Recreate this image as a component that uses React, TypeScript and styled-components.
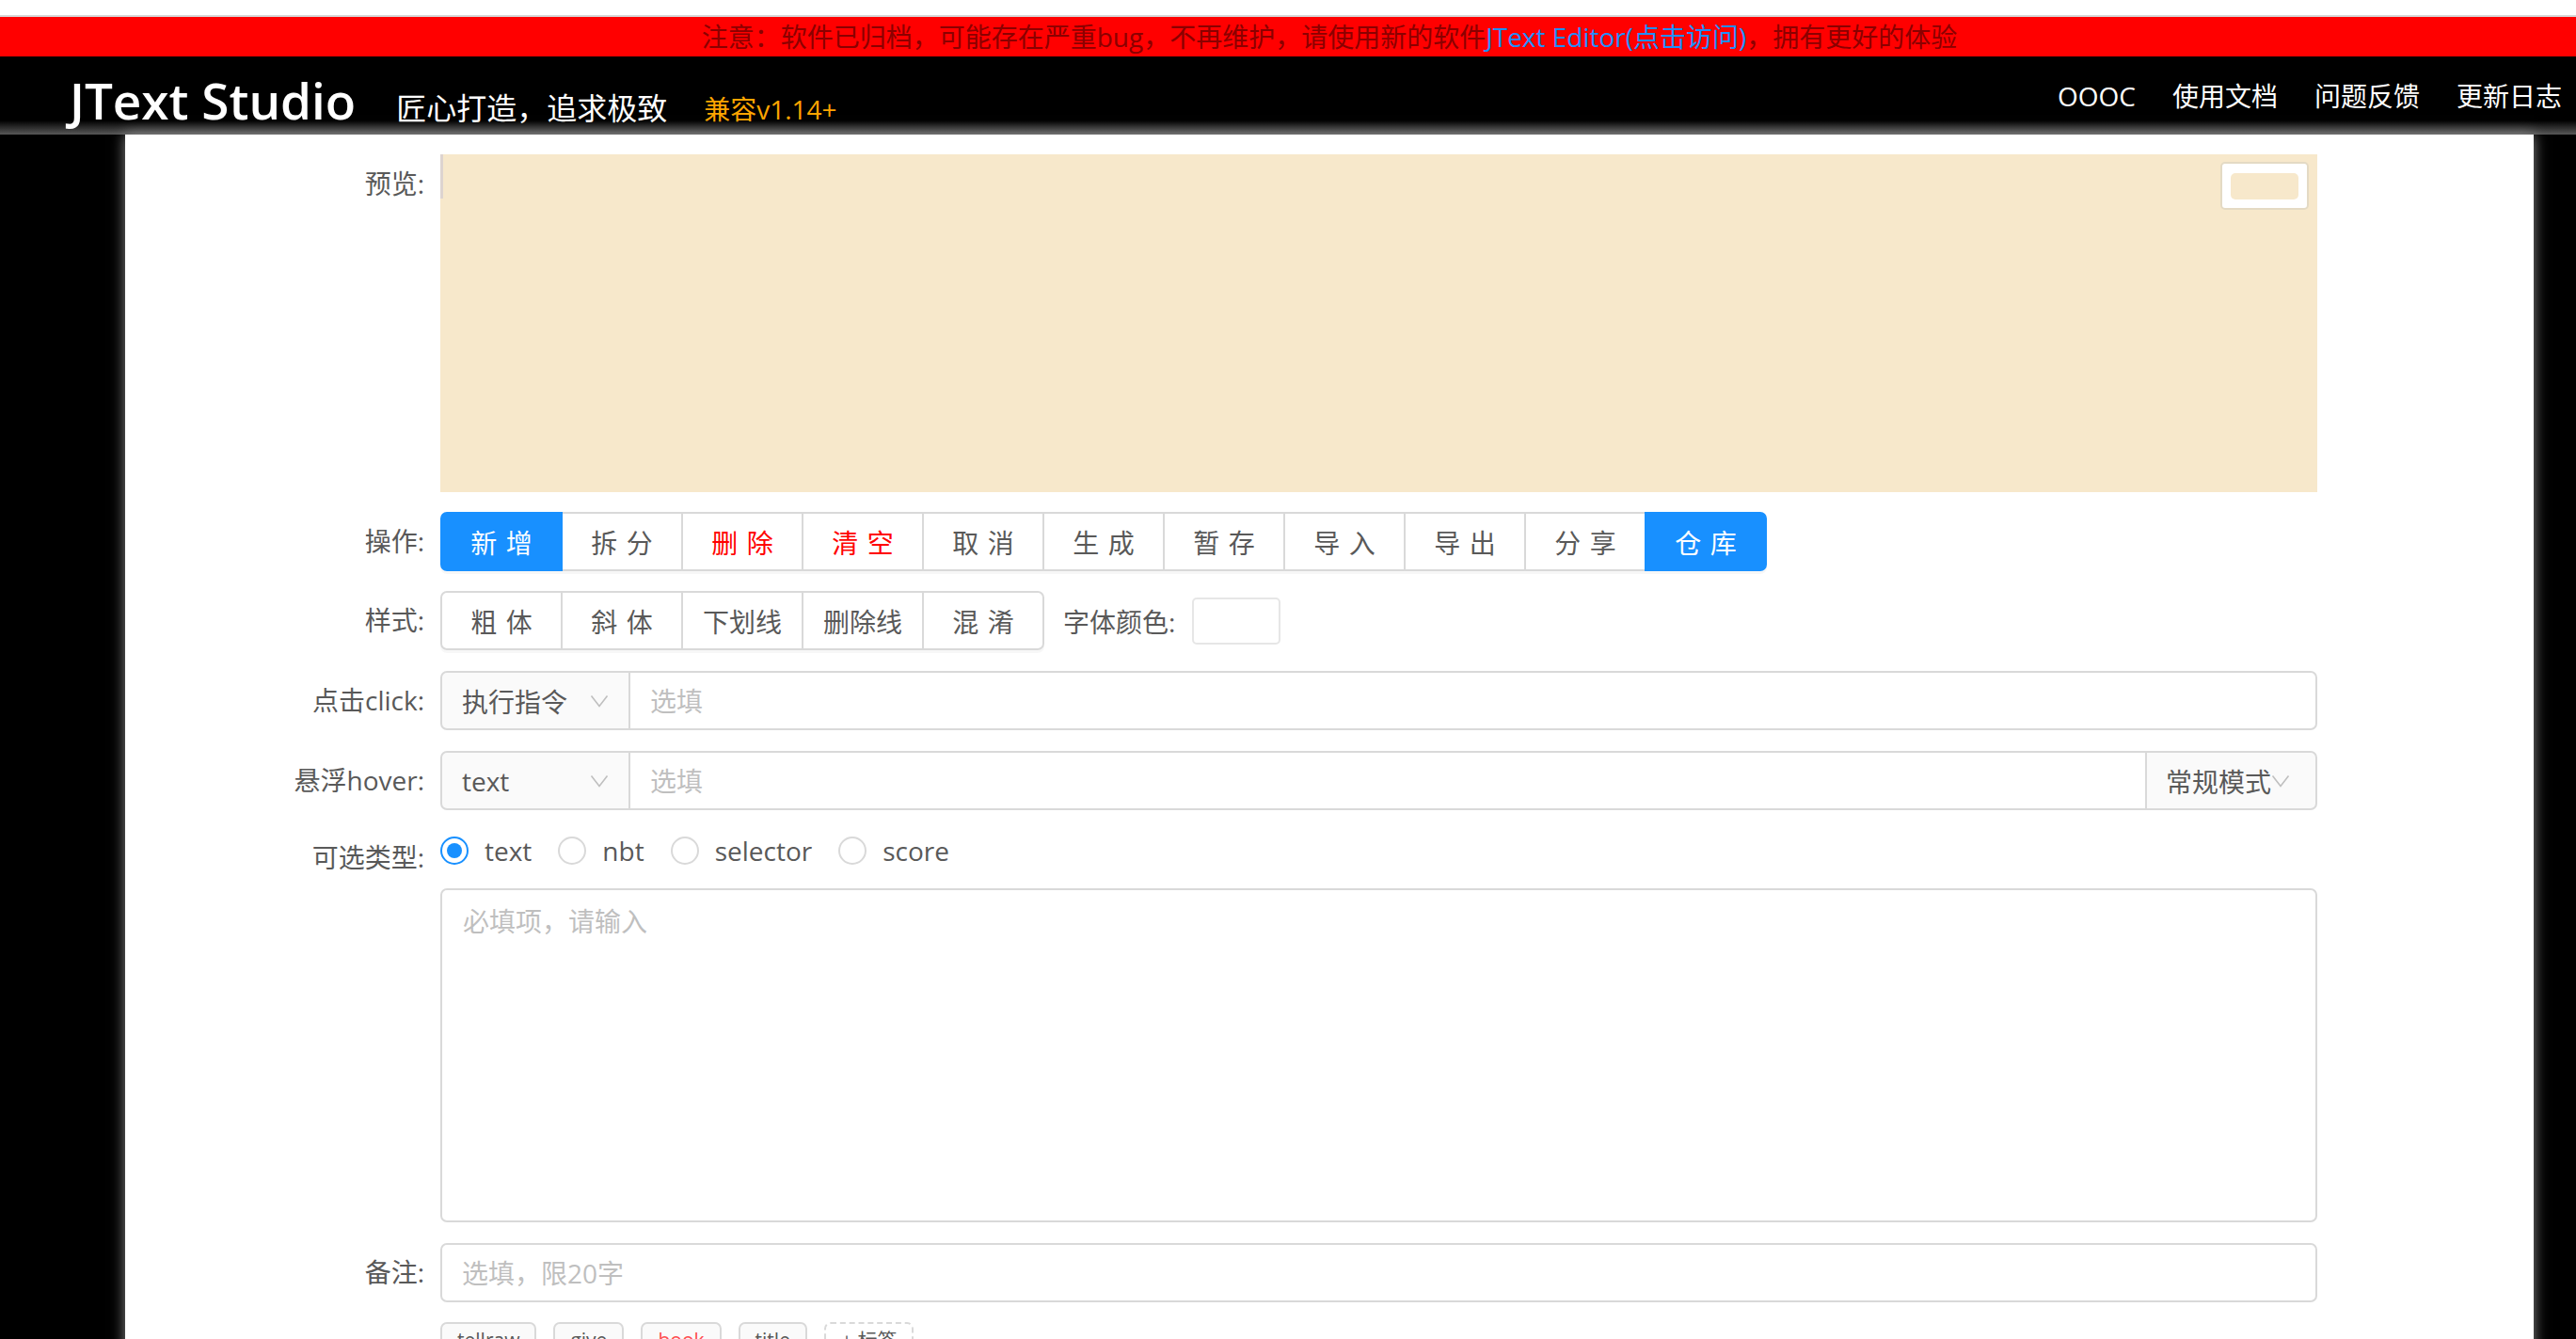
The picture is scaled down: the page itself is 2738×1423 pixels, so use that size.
import styled, { createGlobalStyle } from "styled-components";

const GlobalStyle = createGlobalStyle`
  html, body {
    margin: 0;
    padding: 0;
    overflow: hidden;
    background: #000;
  }
  body {
    font-family: "Open Sans", "Noto Sans CJK SC", sans-serif;
  }
  * {
    box-sizing: border-box;
  }
`;

const Page = styled.div`
  min-height: 1423px;
  background: #000;
`;

const TopStrip = styled.div`
  height: 18px;
  background: #fff;
  border-bottom: 2px solid #d6d6d6;
`;

const Notice = styled.div`
  height: 42px;
  line-height: 42px;
  background: #ff0000;
  color: #8b0000;
  font-size: 28px;
  text-align: center;
  padding-left: 88px;
  white-space: nowrap;
`;

const NoticeLink = styled.a`
  color: #1e90ff;
  text-decoration: none;
`;

const Header = styled.header`
  height: 83px;
  display: flex;
  justify-content: space-between;
  align-items: flex-start;
  padding: 0 15px 0 74px;
  background: linear-gradient(to bottom, #000 0, #000 82%, #585858 100%);
`;

const Brand = styled.div`
  display: flex;
  align-items: baseline;
  margin-top: 20px;
  color: #fff;
`;

const Title = styled.h1`
  margin: 0;
  font-size: 53px;
  font-weight: 600;
  line-height: 1;
`;

const Slogan = styled.span`
  margin-left: 43px;
  font-size: 32px;
`;

const Version = styled.span`
  margin-left: 39px;
  font-size: 28px;
  color: #ffa500;
`;

const Nav = styled.nav`
  display: flex;
  gap: 39px;
  margin-top: 28px;
  line-height: 28px;
`;

const NavLink = styled.a`
  color: #fff;
  font-size: 28px;
  text-decoration: none;
`;

const Card = styled.main`
  margin: 0 45px 0 133px;
  min-height: 1280px;
  padding: 21px 230px 0 0;
  background: #fff;
  box-shadow: 0 0 14px #8a8a8a;
  position: relative;
`;

const Row = styled.div<{ $gap?: number }>`
  display: grid;
  grid-template-columns: 335px 1fr;
  margin-bottom: ${(p) => (p.$gap ?? 21)}px;
`;

const Label = styled.div<{ $lh?: number; $top?: number }>`
  text-align: right;
  padding-right: 17px;
  padding-top: ${(p) => p.$top ?? 0}px;
  line-height: ${(p) => p.$lh ?? 63}px;
  font-size: 28px;
  color: #595959;
  white-space: nowrap;
`;

const Preview = styled.div`
  position: relative;
  height: 359px;
  background: #f7e8cb;
`;

const Caret = styled.div`
  width: 3px;
  height: 47px;
  background: #ddd4d0;
`;

const BgPicker = styled.div`
  position: absolute;
  top: 8px;
  right: 9px;
  width: 94px;
  height: 51px;
  padding: 10px 9px 9px;
  background: #fff;
  border: 2px solid #e4dac4;
  border-radius: 5px;
`;

const Swatch = styled.div`
  height: 100%;
  background: #f7e8cb;
  border-radius: 5px;
`;

const Line = styled.div`
  display: flex;
  align-items: center;
`;

const ButtonGroup = styled.div`
  display: flex;
  border-radius: 7px;
  box-shadow: 0 3px 0 rgba(0, 0, 0, 0.03);
`;

const Btn = styled.button<{ $primary?: boolean; $danger?: boolean }>`
  position: relative;
  z-index: ${(p) => (p.$primary ? 1 : 0)};
  width: 130px;
  height: 63px;
  margin-left: -2px;
  padding: 0;
  font-family: inherit;
  font-size: 28px;
  background: ${(p) => (p.$primary ? "#1890ff" : "#fff")};
  color: ${(p) => (p.$primary ? "#fff" : p.$danger ? "#ff0000" : "#595959")};
  border: 2px solid ${(p) => (p.$primary ? "#1890ff" : "#d9d9d9")};
  border-radius: 0;
  cursor: pointer;

  &:first-child {
    margin-left: 0;
    border-radius: 7px 0 0 7px;
  }
  &:last-child {
    border-radius: 0 7px 7px 0;
  }
`;

const BtnText = styled.span<{ $spaced?: boolean }>`
  letter-spacing: ${(p) => (p.$spaced ? "0.34em" : "0")};
  margin-right: ${(p) => (p.$spaced ? "-0.34em" : "0")};
`;

const ColorLabel = styled.span`
  margin-left: 20px;
  font-size: 28px;
  color: #595959;
`;

const ColorBox = styled.div`
  width: 94px;
  height: 50px;
  margin-left: 18px;
  background: #fff;
  border: 2px solid #e6e6e6;
  border-radius: 5px;
`;

const InputGroup = styled.div`
  display: flex;
  height: 63px;
`;

const Addon = styled.div<{ $width: number; $side: "left" | "right" }>`
  flex: none;
  width: ${(p) => p.$width}px;
  display: flex;
  align-items: center;
  justify-content: ${(p) => (p.$side === "left" ? "space-between" : "flex-start")};
  padding: ${(p) => (p.$side === "left" ? "0 21px 0 21px" : "0 0 0 20px")};
  background: #fafafa;
  border: 2px solid #d9d9d9;
  border-radius: ${(p) => (p.$side === "left" ? "7px 0 0 7px" : "0 7px 7px 0")};
  margin-left: ${(p) => (p.$side === "right" ? "-2px" : "0")};
  font-size: 28px;
  color: #595959;
`;

const Arrow = styled.svg`
  width: 20px;
  height: 14px;
  flex: none;
`;

const Field = styled.input<{ $round?: "right" | "none" | "all" }>`
  flex: 1;
  min-width: 0;
  height: 63px;
  margin-left: ${(p) => (p.$round === "all" ? "0" : "-2px")};
  padding: 0 21px;
  font-family: inherit;
  font-size: 28px;
  color: #595959;
  background: #fff;
  border: 2px solid #d9d9d9;
  border-radius: ${(p) =>
    p.$round === "all" ? "7px" : p.$round === "right" ? "0 7px 7px 0" : "0"};
  outline: none;

  &::placeholder {
    color: #bfbfbf;
  }
`;

const RadioGroup = styled.div`
  display: flex;
  align-items: center;
  height: 42px;
`;

const RadioOption = styled.label`
  display: inline-flex;
  align-items: center;
  gap: 17px;
  margin-right: 28px;
  font-size: 28px;
  color: #595959;
`;

const RadioCircle = styled.span<{ $checked?: boolean }>`
  position: relative;
  width: 30px;
  height: 30px;
  border-radius: 50%;
  background: #fff;
  border: 2px solid ${(p) => (p.$checked ? "#1890ff" : "#d9d9d9")};

  &::after {
    content: "";
    position: absolute;
    inset: 5px;
    border-radius: 50%;
    background: #1890ff;
    display: ${(p) => (p.$checked ? "block" : "none")};
  }
`;

const TextArea = styled.textarea`
  display: block;
  width: 100%;
  height: 355px;
  padding: 12px 22px;
  font-family: inherit;
  font-size: 28px;
  line-height: 1.5;
  color: #595959;
  border: 2px solid #d9d9d9;
  border-radius: 7px;
  resize: none;
  outline: none;

  &::placeholder {
    color: #bfbfbf;
  }
`;

const Tags = styled.div`
  display: flex;
  gap: 18px;
`;

const Tag = styled.span<{ $dashed?: boolean; $color?: string }>`
  display: inline-block;
  height: 38px;
  line-height: 34px;
  padding: 0 16px;
  font-size: 21px;
  color: ${(p) => p.$color ?? "#595959"};
  background: ${(p) => (p.$dashed ? "#fff" : "#fafafa")};
  border: 2px ${(p) => (p.$dashed ? "dashed" : "solid")} #d9d9d9;
  border-radius: 7px;
`;

const Chevron = () => (
  <Arrow viewBox="0 0 20 14">
    <path d="M1.5 1.5 L10 12.5 L18.5 1.5" fill="none" stroke="#bfbfbf" strokeWidth="1.6" />
  </Arrow>
);

const ops = [
  { t: "新增", primary: true },
  { t: "拆分" },
  { t: "删除", danger: true },
  { t: "清空", danger: true },
  { t: "取消" },
  { t: "生成" },
  { t: "暂存" },
  { t: "导入" },
  { t: "导出" },
  { t: "分享" },
  { t: "仓库", primary: true },
];

const styles = ["粗体", "斜体", "下划线", "删除线", "混淆"];

const radios = ["text", "nbt", "selector", "score"];

const tags = [
  { t: "tellraw" },
  { t: "give" },
  { t: "book", color: "#ff4d4f" },
  { t: "title" },
];

const App = () => (
  <Page>
    <GlobalStyle />
    <TopStrip />
    <Notice>
      注意：软件已归档，可能存在严重bug，不再维护，请使用新的软件
      <NoticeLink href="#">JText Editor(点击访问)</NoticeLink>，拥有更好的体验
    </Notice>
    <Header>
      <Brand>
        <Title>JText Studio</Title>
        <Slogan>匠心打造，追求极致</Slogan>
        <Version>兼容v1.14+</Version>
      </Brand>
      <Nav>
        <NavLink href="#">OOOC</NavLink>
        <NavLink href="#">使用文档</NavLink>
        <NavLink href="#">问题反馈</NavLink>
        <NavLink href="#">更新日志</NavLink>
      </Nav>
    </Header>
    <Card>
      <Row>
        <Label>预览:</Label>
        <Preview>
          <Caret />
          <BgPicker>
            <Swatch />
          </BgPicker>
        </Preview>
      </Row>

      <Row>
        <Label>操作:</Label>
        <Line>
          <ButtonGroup>
            {ops.map((o) => (
              <Btn key={o.t} $primary={o.primary} $danger={o.danger}>
                <BtnText $spaced={o.t.length === 2}>{o.t}</BtnText>
              </Btn>
            ))}
          </ButtonGroup>
        </Line>
      </Row>

      <Row $gap={22}>
        <Label>样式:</Label>
        <Line>
          <ButtonGroup>
            {styles.map((s) => (
              <Btn key={s}>
                <BtnText $spaced={s.length === 2}>{s}</BtnText>
              </Btn>
            ))}
          </ButtonGroup>
          <ColorLabel>字体颜色:</ColorLabel>
          <ColorBox />
        </Line>
      </Row>

      <Row $gap={22}>
        <Label>点击click:</Label>
        <InputGroup>
          <Addon $width={202} $side="left">
            执行指令
            <Chevron />
          </Addon>
          <Field $round="right" placeholder="选填" />
        </InputGroup>
      </Row>

      <Row $gap={22}>
        <Label>悬浮hover:</Label>
        <InputGroup>
          <Addon $width={202} $side="left">
            text
            <Chevron />
          </Addon>
          <Field $round="none" placeholder="选填" />
          <Addon $width={183} $side="right">
            常规模式
            <Chevron />
          </Addon>
        </InputGroup>
      </Row>

      <Row $gap={12}>
        <Label $lh={42} $top={7}>
          可选类型:
        </Label>
        <RadioGroup>
          {radios.map((r, i) => (
            <RadioOption key={r}>
              <RadioCircle $checked={i === 0} />
              {r}
            </RadioOption>
          ))}
        </RadioGroup>
      </Row>

      <Row $gap={22}>
        <Label />
        <TextArea placeholder="必填项，请输入" />
      </Row>

      <Row>
        <Label>备注:</Label>
        <Line>
          <Field $round="all" placeholder="选填，限20字" />
        </Line>
      </Row>

      <Row>
        <Label />
        <Tags>
          {tags.map((t) => (
            <Tag key={t.t} $color={t.color}>
              {t.t}
            </Tag>
          ))}
          <Tag $dashed>+ 标签</Tag>
        </Tags>
      </Row>
    </Card>
  </Page>
);

export default App;
